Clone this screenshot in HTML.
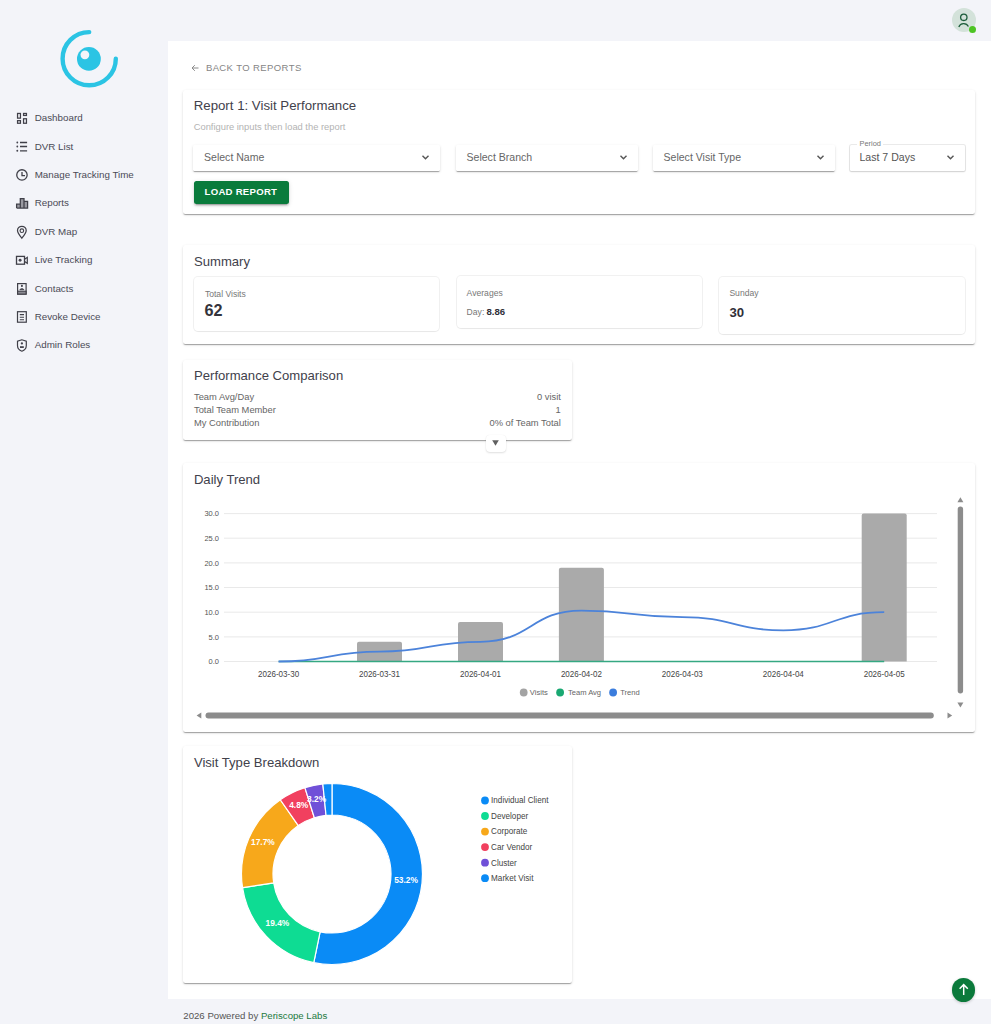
<!DOCTYPE html>
<html><head><meta charset="utf-8">
<style>
*{box-sizing:border-box;margin:0;padding:0}
html,body{width:991px;height:1024px;overflow:hidden}
body{background:#f3f4f9;font-family:"Liberation Sans",sans-serif;position:relative;color:#333}
.t{position:absolute;line-height:1;white-space:nowrap}
.nav{font-size:9.8px;color:#4a4a56;left:34.7px}
.ico{position:absolute;left:15px;width:14px;height:14px}
.panel{position:absolute;left:168px;top:41px;width:823px;height:958px;background:#fff}
.card{position:absolute;background:#fff;border-radius:2.5px;box-shadow:0 2px 1px -1px rgba(0,0,0,.2),0 1px 1px 0 rgba(0,0,0,.14),0 1px 3px 0 rgba(0,0,0,.12)}
.sel{position:absolute;top:145px;height:25.5px;background:#fff;border-radius:1.5px;box-shadow:0 2px 1px -1px rgba(0,0,0,.2),0 1px 1px 0 rgba(0,0,0,.14),0 1px 3px 0 rgba(0,0,0,.12)}
.sel span{position:absolute;left:11px;top:7.2px;font-size:10.55px;line-height:1;color:#666;white-space:nowrap}
.chev{position:absolute;right:10px;top:8.6px;width:9px;height:7px}
.title{font-size:13.1px;color:#41414b}
.stat{position:absolute;background:#fff;border-radius:4px;box-shadow:0 0 0 1px rgba(0,0,0,.055),0 1px 1px rgba(0,0,0,.04)}
.lbl{font-size:8.6px;color:#777}
.row{font-size:9.35px;color:#666}
</style></head><body>

<!-- logo -->
<svg style="position:absolute;left:0;top:0" width="168" height="100" viewBox="0 0 168 100">
  <path d="M89.2,32.1 A26.6,26.6 0 1 0 115.8,58.7" fill="none" stroke="#2bc4e4" stroke-width="4.4" stroke-linecap="round"/>
  <circle cx="88.9" cy="58.9" r="11.9" fill="#2bc4e4"/>
  <circle cx="84.9" cy="54.8" r="4.4" fill="#f3f4f9"/>
</svg>

<!-- nav icons -->
<svg style="position:absolute;left:0;top:0" width="40" height="370" viewBox="0 0 40 370" fill="none" stroke="#404049" stroke-width="1.25">
<rect x="17.55" y="113.45" width="2.9" height="4.7"/><rect x="17.55" y="120.65" width="2.9" height="2.6"/><rect x="23.55" y="113.45" width="2.9" height="2"/><rect x="23.55" y="118.75" width="2.9" height="4.5"/>
<path d="M20,142.5H27.1M20,146.5H27.1M20,150.8H27.1" stroke-width="1.3"/>
<circle cx="17.3" cy="142.5" r=".9" fill="#45454f" stroke="none"/><circle cx="17.3" cy="146.5" r=".9" fill="#45454f" stroke="none"/><circle cx="17.3" cy="150.8" r=".95" fill="#45454f" stroke="none"/>
<circle cx="21.95" cy="174.95" r="5.2" stroke-width="1.3"/><path d="M22,172.1V175.6H25" stroke-width="1.3"/>
<path d="M16.6,208V204.2H20.3V208M20.3,208V198.5H24V208M24,208V201.3H27.6V208H16.6Z" fill="#9a9aa2"/>
<path d="M21.85,238.2C20.5,236.6 17.5,233.2 17.5,230.6A4.35,4.35 0 0 1 26.2,230.6C26.2,233.2 23.2,236.6 21.85,238.2Z" stroke-width="1.25"/><circle cx="21.85" cy="230.7" r="1.8" stroke-width="1.15"/>
<rect x="16.5" y="256.4" width="8" height="7.8" stroke-width="1.3"/><circle cx="20.1" cy="260.3" r="1.45" fill="#45454f" stroke="none"/><path d="M24.6,259.2L27.3,257.3V263.3L24.6,261.4" stroke-width="1.2"/>
<rect x="17.6" y="283.6" width="8.5" height="10.5" stroke-width="1.2"/><rect x="17.6" y="291.2" width="8.5" height="2.9" fill="#8a8a92" stroke-width="1.1"/><circle cx="21.9" cy="285.9" r="1.05" fill="#45454f" stroke="none"/><path d="M19.9,289.7C19.9,288.3 23.9,288.3 23.9,289.7Z" fill="#45454f" stroke-width=".8"/>
<rect x="17.5" y="311.7" width="8.8" height="10.5" stroke-width="1.2"/><path d="M19.8,314.6H24M19.8,317.2H24M19.8,319.8H24" stroke-width="1.1"/>
<path d="M21.9,339.8L17.5,341.3V345.6C17.5,348.3 19.4,350.4 21.9,351.2C24.4,350.4 26.3,348.3 26.3,345.6V341.3Z" stroke-width="1.2"/><circle cx="21.9" cy="343.4" r="1.15" fill="#45454f" stroke="none"/><rect x="20" y="346.2" width="3.8" height="1.8" fill="#45454f" stroke="none"/>
</svg>
<div class="t nav" style="top:113.1px">Dashboard</div>
<div class="t nav" style="top:141.5px">DVR List</div>
<div class="t nav" style="top:169.9px">Manage Tracking Time</div>
<div class="t nav" style="top:198.3px">Reports</div>
<div class="t nav" style="top:226.7px">DVR Map</div>
<div class="t nav" style="top:255.1px">Live Tracking</div>
<div class="t nav" style="top:283.5px">Contacts</div>
<div class="t nav" style="top:311.9px">Revoke Device</div>
<div class="t nav" style="top:340.3px">Admin Roles</div>

<!-- avatar -->
<div style="position:absolute;left:951.5px;top:8px;width:24px;height:24px;border-radius:50%;background:#d3e2da"></div>
<svg style="position:absolute;left:951.5px;top:8px" width="24" height="24" viewBox="0 0 24 24">
  <circle cx="11.8" cy="9.3" r="3.2" fill="none" stroke="#1d5e3c" stroke-width="1.3"/>
  <path d="M6.8,19 A5.2,5.2 0 0 1 16.4,18.6" fill="none" stroke="#1d5e3c" stroke-width="1.3"/>
</svg>
<div style="position:absolute;left:968.6px;top:26px;width:7.2px;height:7.2px;border-radius:50%;background:#4dc424"></div>

<!-- main panel -->
<div class="panel"></div>

<!-- back -->
<svg style="position:absolute;left:190px;top:63px" width="10" height="10" viewBox="0 0 10 10"><path d="M8.5,5 H2 M4.8,2.2 L2,5 L4.8,7.8" fill="none" stroke="#8a8a8a" stroke-width="1"/></svg>
<div class="t" style="left:205.9px;top:63.3px;font-size:9.5px;letter-spacing:.4px;color:#858585">BACK TO REPORTS</div>

<!-- card 1 -->
<div class="card" style="left:183px;top:90px;width:792px;height:124px"></div>
<div class="t title" style="left:193.7px;top:99.1px;font-size:13.25px">Report 1: Visit Performance</div>
<div class="t" style="left:193.7px;top:123px;font-size:9.36px;color:#b3b3b3">Configure inputs then load the report</div>
<div class="sel" style="left:193px;width:247px"><span>Select Name</span><svg class="chev" viewBox="0 0 9 7"><path d="M1.5,1.8 L4.5,4.8 L7.5,1.8" fill="none" stroke="#555" stroke-width="1.4"/></svg></div>
<div class="sel" style="left:455.5px;width:182px"><span>Select Branch</span><svg class="chev" viewBox="0 0 9 7"><path d="M1.5,1.8 L4.5,4.8 L7.5,1.8" fill="none" stroke="#555" stroke-width="1.4"/></svg></div>
<div class="sel" style="left:652.5px;width:182px"><span>Select Visit Type</span><svg class="chev" viewBox="0 0 9 7"><path d="M1.5,1.8 L4.5,4.8 L7.5,1.8" fill="none" stroke="#555" stroke-width="1.4"/></svg></div>
<div class="sel" style="left:849.5px;width:115px;box-shadow:0 0 0 1px rgba(0,0,0,.08),0 1px 2px rgba(0,0,0,.12)"><span style="left:10px;color:#555">Last 7 Days</span><svg class="chev" viewBox="0 0 9 7"><path d="M1.5,1.8 L4.5,4.8 L7.5,1.8" fill="none" stroke="#555" stroke-width="1.4"/></svg></div>
<div class="t" style="left:857px;top:139.9px;font-size:7.4px;color:#777;background:#fff;padding:0 2.5px">Period</div>
<div style="position:absolute;left:194px;top:181px;width:94.5px;height:22.5px;background:#0a7b3c;border-radius:2.5px;box-shadow:0 3px 1px -2px rgba(0,0,0,.2),0 2px 2px 0 rgba(0,0,0,.14),0 1px 5px 0 rgba(0,0,0,.12)"></div>
<div class="t" style="left:204.6px;top:187.3px;font-size:9.6px;font-weight:bold;letter-spacing:.25px;color:#fff">LOAD REPORT</div>

<!-- card 2 summary -->
<div class="card" style="left:183px;top:245px;width:792px;height:99px"></div>
<div class="t title" style="left:194px;top:254.6px">Summary</div>
<div class="stat" style="left:194px;top:276.5px;width:245px;height:54.5px"></div>
<div class="t lbl" style="left:204.9px;top:289.6px">Total Visits</div>
<div class="t" style="left:204.5px;top:301.7px;font-size:16.2px;font-weight:bold;color:#33333b">62</div>
<div class="stat" style="left:456.5px;top:276px;width:245.5px;height:52px"></div>
<div class="t lbl" style="left:466.6px;top:289.3px">Averages</div>
<div class="t lbl" style="left:466.6px;top:307.7px">Day:</div>
<div class="t" style="left:486.5px;top:307.2px;font-size:9.6px;font-weight:bold;color:#2f2f38">8.86</div>
<div class="stat" style="left:718.5px;top:276.5px;width:246.5px;height:57.5px"></div>
<div class="t lbl" style="left:729.4px;top:289.4px">Sunday</div>
<div class="t" style="left:729.4px;top:306.3px;font-size:13.2px;font-weight:bold;color:#2f2f38">30</div>

<!-- card 3 performance -->
<div class="card" style="left:183px;top:360px;width:389px;height:80px"></div>
<div class="t title" style="left:194px;top:369px">Performance Comparison</div>
<div class="t row" style="left:194px;top:393.3px">Team Avg/Day</div>
<div class="t row" style="left:194px;top:406.4px">Total Team Member</div>
<div class="t row" style="left:194px;top:419.2px">My Contribution</div>
<div class="t row" style="right:430.2px;top:393.3px">0 visit</div>
<div class="t row" style="right:430.2px;top:406.4px">1</div>
<div class="t row" style="right:430.2px;top:419.2px">0% of Team Total</div>
<div style="position:absolute;left:486px;top:434.5px;width:19.5px;height:17px;background:#fff;border-radius:4px;box-shadow:0 1px 2px rgba(0,0,0,.12),0 0 1px rgba(0,0,0,.08)"></div>
<svg style="position:absolute;left:491px;top:439px" width="9" height="8" viewBox="0 0 9 8"><path d="M1.2,1.2 L7.8,1.2 L4.5,6.8 Z" fill="#606060"/></svg>

<div class="card" style="left:183px;top:463px;width:792px;height:268.5px"></div>
<div class="t title" style="left:193.9px;top:472.7px">Daily Trend</div>
<svg style="position:absolute;left:0;top:0" width="991" height="1024" viewBox="0 0 991 1024">
<line x1="224" y1="661.5" x2="937" y2="661.5" stroke="#e9e9e9" stroke-width="1"/>
<text x="219" y="664.1" font-size="7.5" fill="#555" text-anchor="end">0.0</text>
<line x1="224" y1="636.9" x2="937" y2="636.9" stroke="#e9e9e9" stroke-width="1"/>
<text x="219" y="639.5" font-size="7.5" fill="#555" text-anchor="end">5.0</text>
<line x1="224" y1="612.2" x2="937" y2="612.2" stroke="#e9e9e9" stroke-width="1"/>
<text x="219" y="614.8" font-size="7.5" fill="#555" text-anchor="end">10.0</text>
<line x1="224" y1="587.5" x2="937" y2="587.5" stroke="#e9e9e9" stroke-width="1"/>
<text x="219" y="590.1" font-size="7.5" fill="#555" text-anchor="end">15.0</text>
<line x1="224" y1="562.9" x2="937" y2="562.9" stroke="#e9e9e9" stroke-width="1"/>
<text x="219" y="565.5" font-size="7.5" fill="#555" text-anchor="end">20.0</text>
<line x1="224" y1="538.2" x2="937" y2="538.2" stroke="#e9e9e9" stroke-width="1"/>
<text x="219" y="540.9" font-size="7.5" fill="#555" text-anchor="end">25.0</text>
<line x1="224" y1="513.6" x2="937" y2="513.6" stroke="#e9e9e9" stroke-width="1"/>
<text x="219" y="516.2" font-size="7.5" fill="#555" text-anchor="end">30.0</text>
<path d="M357.0,661.5 V643.8 Q357.0,641.8 359.0,641.8 H400.0 Q402.0,641.8 402.0,643.8 V661.5 Z" fill="#aaaaaa"/>
<path d="M458.0,661.5 V624.1 Q458.0,622.1 460.0,622.1 H501.0 Q503.0,622.1 503.0,624.1 V661.5 Z" fill="#aaaaaa"/>
<path d="M558.9,661.5 V569.8 Q558.9,567.8 560.9,567.8 H601.9 Q603.9,567.8 603.9,569.8 V661.5 Z" fill="#aaaaaa"/>
<path d="M861.7,661.5 V515.6 Q861.7,513.6 863.7,513.6 H904.7 Q906.7,513.6 906.7,515.6 V661.5 Z" fill="#aaaaaa"/>
<text x="278.6" y="677.3" font-size="8.9" fill="#444" text-anchor="middle" textLength="41" lengthAdjust="spacingAndGlyphs">2026-03-30</text>
<text x="379.5" y="677.3" font-size="8.9" fill="#444" text-anchor="middle" textLength="41" lengthAdjust="spacingAndGlyphs">2026-03-31</text>
<text x="480.5" y="677.3" font-size="8.9" fill="#444" text-anchor="middle" textLength="41" lengthAdjust="spacingAndGlyphs">2026-04-01</text>
<text x="581.4" y="677.3" font-size="8.9" fill="#444" text-anchor="middle" textLength="41" lengthAdjust="spacingAndGlyphs">2026-04-02</text>
<text x="682.3" y="677.3" font-size="8.9" fill="#444" text-anchor="middle" textLength="41" lengthAdjust="spacingAndGlyphs">2026-04-03</text>
<text x="783.3" y="677.3" font-size="8.9" fill="#444" text-anchor="middle" textLength="41" lengthAdjust="spacingAndGlyphs">2026-04-04</text>
<text x="884.2" y="677.3" font-size="8.9" fill="#444" text-anchor="middle" textLength="41" lengthAdjust="spacingAndGlyphs">2026-04-05</text>
<line x1="278.6" y1="661.5" x2="884.2" y2="661.5" stroke="#35a882" stroke-width="1.3"/>
<path d="M278.6,661.5 C329.05,661.50 329.05,651.64 379.5,651.64 C430.00,651.64 430.00,641.78 480.5,641.78 C530.95,641.78 530.95,610.56 581.4,610.56 C631.85,610.56 631.85,617.13 682.3,617.13 C732.80,617.13 732.80,630.28 783.3,630.28 C833.75,630.28 833.75,612.20 884.2,612.20" fill="none" stroke="#4c83da" stroke-width="1.8"/>
<circle cx="523.7" cy="692.5" r="3.9" fill="#a3a3a3"/><text x="529.8" y="695.3" font-size="7.6" fill="#666">Visits</text>
<circle cx="560.1" cy="692.5" r="3.9" fill="#19a872"/><text x="567.9" y="695.3" font-size="7.6" fill="#666">Team Avg</text>
<circle cx="613.1" cy="692.5" r="3.9" fill="#3b7ddd"/><text x="620.2" y="695.3" font-size="7.6" fill="#666">Trend</text>
<rect x="957.7" y="506.4" width="5.4" height="187" rx="2.7" fill="#8c8c8c"/>
<path d="M957.4,502.3 L963.4,502.3 L960.4,497.3 Z" fill="#8c8c8c"/>
<path d="M957.4,702.6 L963.4,702.6 L960.4,707.6 Z" fill="#8c8c8c"/>
<rect x="205.5" y="712.6" width="728.3" height="5.9" rx="2.95" fill="#8c8c8c"/>
<path d="M201.3,712.6 L201.3,718.6 L196.6,715.6 Z" fill="#8c8c8c"/>
<path d="M947.5,712.6 L947.5,718.6 L952.2,715.6 Z" fill="#8c8c8c"/>
</svg>

<!--C5S--><div class="card" style="left:183px;top:745.5px;width:389px;height:237px"></div>
<div class="t title" style="left:193.9px;top:755.5px">Visit Type Breakdown</div>
<svg style="position:absolute;left:0;top:0" width="991" height="1024" viewBox="0 0 991 1024">
<path d="M332.00,783.50 A90.5,90.5 0 1 1 313.78,962.65 L320.12,931.79 A59,59 0 1 0 332.00,815.00 Z" fill="#0a8bf6" stroke="#fff" stroke-width="1.2"/>
<path d="M313.78,962.65 A90.5,90.5 0 0 1 242.54,887.70 L273.68,882.93 A59,59 0 0 0 320.12,931.79 Z" fill="#0edc93" stroke="#fff" stroke-width="1.2"/>
<path d="M242.54,887.70 A90.5,90.5 0 0 1 280.30,799.72 L298.30,825.57 A59,59 0 0 0 273.68,882.93 Z" fill="#f7a81b" stroke="#fff" stroke-width="1.2"/>
<path d="M280.30,799.72 A90.5,90.5 0 0 1 304.91,787.65 L314.34,817.71 A59,59 0 0 0 298.30,825.57 Z" fill="#f1405f" stroke="#fff" stroke-width="1.2"/>
<path d="M304.91,787.65 A90.5,90.5 0 0 1 322.84,783.96 L326.03,815.30 A59,59 0 0 0 314.34,817.71 Z" fill="#7050d8" stroke="#fff" stroke-width="1.2"/>
<path d="M322.84,783.96 A90.5,90.5 0 0 1 332.00,783.50 L332.00,815.00 A59,59 0 0 0 326.03,815.30 Z" fill="#0a8bf6" stroke="#fff" stroke-width="1.2"/>
<text x="406.0" y="882.5" font-size="8.4" font-weight="bold" fill="#fff" text-anchor="middle">53.2%</text>
<text x="277.4" y="926.4" font-size="8.4" font-weight="bold" fill="#fff" text-anchor="middle">19.4%</text>
<text x="262.9" y="845.4" font-size="8.4" font-weight="bold" fill="#fff" text-anchor="middle">17.7%</text>
<text x="298.7" y="807.8" font-size="8.4" font-weight="bold" fill="#fff" text-anchor="middle">4.8%</text>
<text x="316.6" y="801.7" font-size="8.4" font-weight="bold" fill="#fff" text-anchor="middle">3.2%</text>
<circle cx="485" cy="800.5" r="3.9" fill="#0a8bf6"/><text x="491.1" y="803.3" font-size="8.15" fill="#444">Individual Client</text>
<circle cx="485" cy="816.0" r="3.9" fill="#0edc93"/><text x="491.1" y="818.8" font-size="8.15" fill="#444">Developer</text>
<circle cx="485" cy="831.6" r="3.9" fill="#f7a81b"/><text x="491.1" y="834.4" font-size="8.15" fill="#444">Corporate</text>
<circle cx="485" cy="847.1" r="3.9" fill="#f1405f"/><text x="491.1" y="849.9" font-size="8.15" fill="#444">Car Vendor</text>
<circle cx="485" cy="862.7" r="3.9" fill="#7050d8"/><text x="491.1" y="865.5" font-size="8.15" fill="#444">Cluster</text>
<circle cx="485" cy="878.2" r="3.9" fill="#0a8bf6"/><text x="491.1" y="881.0" font-size="8.15" fill="#444">Market Visit</text>
</svg><!--C5E-->

<div class="t" style="left:183.3px;top:1010.9px;font-size:9.63px;color:#555">2026 Powered by <span style="color:#1b7a40">Periscope Labs</span></div>
<div style="position:absolute;left:951.8px;top:978.4px;width:23.4px;height:23.4px;border-radius:50%;background:#0b7a3b;box-shadow:0 1px 3px rgba(0,0,0,.2)"></div>
<svg style="position:absolute;left:951.8px;top:978.4px" width="23.4" height="23.4" viewBox="0 0 24 24"><path d="M12,17.5 V7 M7.8,11 L12,6.8 L16.2,11" fill="none" stroke="#fff" stroke-width="1.5"/></svg>
</body></html>
